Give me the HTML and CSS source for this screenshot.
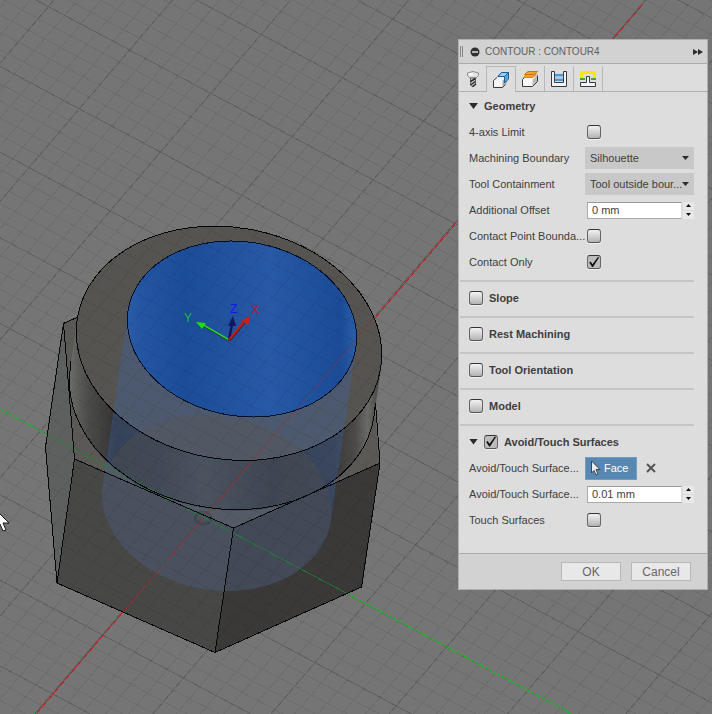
FILE: index.html
```html
<!DOCTYPE html>
<html lang="en">
<head>
<meta charset="utf-8">
<title>Contour</title>
<link rel="stylesheet" href="styles.css">
</head>
<body>
<main class="viewport">
  <svg class="scene" viewBox="0 0 712 714" preserveAspectRatio="xMidYMid slice" role="img" aria-label="Model view">
    <defs>
      <linearGradient id="bore" x1="127" y1="0" x2="357" y2="0" gradientTransform="rotate(-9.870 242 329)" gradientUnits="userSpaceOnUse">
        <stop offset="0" stop-color="#2a5da8"/><stop offset=".06" stop-color="#2355a2"/>
        <stop offset=".25" stop-color="#1b4c98"/><stop offset=".62" stop-color="#2759a6"/>
        <stop offset=".8" stop-color="#1f519d"/><stop offset=".93" stop-color="#1b4b96"/><stop offset="1" stop-color="#2b5faa"/>
      </linearGradient>
      <linearGradient id="collar" x1="69" y1="0" x2="380" y2="0" gradientUnits="userSpaceOnUse">
        <stop offset="0" stop-color="#6c6e6c"/><stop offset=".06" stop-color="#4c4c4a"/>
        <stop offset=".15" stop-color="#353432"/><stop offset=".3" stop-color="#3b3a38"/>
        <stop offset=".43" stop-color="#4a4a48"/><stop offset=".65" stop-color="#343331"/>
        <stop offset=".85" stop-color="#3b3a38"/><stop offset=".92" stop-color="#4c4b49"/><stop offset=".96" stop-color="#6a6a68"/><stop offset="1" stop-color="#444"/>
      </linearGradient>
    </defs>
    <rect width="712" height="714" fill="#757575"/>
    <g id="grid"></g>

    <g>
      <path fill="#5b5955" d="M63 323L84 314 230 300 374 402 380 463 233 528 75 459Z"/>
      <path fill="#5d605f" d="M63 323L45 447 57 583 75 459Z"/>
      <path fill="#474746" d="M75 459L57 583 215 652 233 528Z"/>
      <path fill="#3a3938" d="M233 528L215 652 362 587 380 463Z"/>
      <path fill="url(#collar)" d="M77 320L70 370A153.700 115.900 9.870 0 0 374 417L381 367Z"/>
      <ellipse cx="229" cy="343.300" rx="153.700" ry="115.900" transform="rotate(9.870 229 343.300)" fill="#565450"/>
    </g>
    <path fill="#3868bb" fill-opacity=".3" d="M128 311L102.700 485A115.400 87.050 9.870 0 0 330.800 521L356 347Z"/>
    <ellipse cx="216.700" cy="503" rx="115.400" ry="87.050" transform="rotate(9.870 216.700 503)" fill="#64553c" fill-opacity=".22"/>
    <ellipse cx="242" cy="329" rx="115.400" ry="87.050" transform="rotate(9.870 242 329)" fill="url(#bore)"/>
    <ellipse cx="203" cy="518" rx="8" ry="6" fill="none" stroke="#303640" stroke-width="3" opacity=".35"/>
    <g id="grid-through" opacity=".06"></g>

    <g class="axis" stroke="#b42a2a">
      <path d="M36 714L123 612M375 318L643 4"/>
      <path d="M123 612L250 463.500" opacity=".6"/>
      <path d="M250 463.500L375 318" opacity=".35"/>
    </g>
    <g class="axis" stroke="#1fb32a">
      <path d="M346 593L572 714"/>
      <path d="M0 409L48 435" opacity=".85"/>
      <path d="M48 435L346 593" stroke="#1f8a35" opacity=".65"/>
    </g>

    <g class="edges">
      <ellipse cx="229" cy="343.300" rx="153.700" ry="115.900" transform="rotate(9.870 229 343.300)"/>
      <ellipse cx="242" cy="329" rx="115.400" ry="87.050" transform="rotate(9.870 242 329)" stroke="#04102a"/>
      <path d="M71 361L70 371A153.700 115.900 9.870 0 0 374 416L375.500 403"/>
      <path d="M78 317L63.500 323.500 45.500 447 57 583 215 652.500 361.500 587 380 463 375.500 403M63.500 323.500L74.500 459 57 583M74.500 459L233.500 528 380 463M233.500 528L215 652.500"/>
    </g>

    <g class="triad">
      <path d="M229 340L203 325" stroke="#2fe01f" stroke-width="2"/>
      <path d="M229 341L203 326" stroke="#123a10" stroke-width=".8"/>
      <path d="M196 322L206 323 202 329Z" fill="#1fdc14"/>
      <path d="M229 340L232 324" stroke="#14145e" stroke-width="2.500"/>
      <path d="M233 316L236 326 228 326Z" fill="#151560"/>
      <path d="M229 340L244 322" stroke="#c81b10" stroke-width="2.500"/>
      <path d="M230 341L245 323" stroke="#380808" stroke-width=".8"/>
      <path d="M250 316L248 326 245 322 241 321Z" fill="#d61a0c"/>
      <text x="184" y="322" fill="#18b84a">Y</text>
      <text x="230" y="313" fill="#1414f0">Z</text>
      <text x="251" y="314" fill="#b5182c">X</text>
    </g>
    <path d="M-4 509L-4 528 0 524 3 531 6 530 3 523 9 523-4 510Z" fill="#fff" stroke="#15151c"/>
  </svg>

  <form class="panel">
    <header class="titlebar">
      <span class="grip"></span>
      <button type="button" class="icon-button" aria-label="Collapse">
        <svg width="10" height="10" viewBox="0 0 10 10"><circle cx="5" cy="5" r="4.500" fill="#303030"/><path d="M2 5H8" stroke="#ddd" stroke-width="1.500"/></svg>
      </button>
      <h1>CONTOUR : CONTOUR4</h1>
      <button type="button" class="icon-button" aria-label="Dock">
        <svg width="10" height="8" viewBox="0 0 10 8"><path d="M0 1L5 4 0 7ZM5 1L10 4 5 7Z" fill="#2c2c2c"/></svg>
      </button>
    </header>

    <nav class="tabs">
      <button type="button" class="tab" aria-label="Tool">
        <svg width="14" height="18" viewBox="0 0 14 18">
          <path d="M1.500 3Q7 0 12.500 3V5.500L10 8H4L1.500 5.500Z" fill="#e4e4e4" stroke="#8c8c8c"/>
          <path d="M3 4H7" stroke="#fff" stroke-width="2"/>
          <path d="M4.500 8H9.500V15L7 17 4.500 15Z" fill="#ccc" stroke="#666"/>
          <path d="M4.500 11.500L9.500 8.500M4.500 15L9.500 11.500M6.500 16.500L10 14" stroke="#2c2c2c" stroke-width="1.500"/>
        </svg>
      </button>
      <button type="button" class="tab active" aria-label="Geometry">
        <svg width="18" height="18" viewBox="0 0 18 18">
          <path d="M1.500 9.500L5 6.500H13L14.500 11 11 16.500H1.500Z" fill="#f7f7f7"/>
          <path d="M10.500 9.500L15 5.500V11.500L10.500 16.500Z" fill="#aaa"/>
          <path d="M6 5.500L9.500 1.500H16.500V8L12.500 12V5.500Z" fill="#5ba5da" stroke="#1c5f97"/>
          <path d="M6 5.500L9.500 1.500H16.500L12.500 5.500Z" fill="#9bcdf0" stroke="#1c5f97"/>
          <path d="M5 6.500L1.500 9.500V16.500H10.500L13.500 13.500" fill="none" stroke="#333b48"/>
        </svg>
      </button>
      <button type="button" class="tab" aria-label="Heights">
        <svg width="18" height="18" viewBox="0 0 18 18">
          <path d="M1.500 9.500L4 7H16.500V11.500L11.500 16.500H1.500Z" fill="#fafafa"/>
          <path d="M11.500 9.500L16.500 5V11.500L11.500 16.500Z" fill="#bbb"/>
          <path d="M3 8L1.500 9.500V16.500H11.500L16.500 11.500V5.500" fill="none" stroke="#333b48"/>
          <path d="M2.500 7.500L6 4H15.500L12 7.500Z" fill="#f3a126" stroke="#d98614"/>
          <path d="M3.500 4.500L7 1.500H16.500L13 4.500Z" fill="#f3a126" stroke="#c87810"/>
        </svg>
      </button>
      <button type="button" class="tab" aria-label="Passes">
        <svg width="18" height="18" viewBox="0 0 18 18">
          <path d="M5 5H13M5 10H13" stroke="#4d95d2" stroke-width="2"/><path d="M5 7.500H13" stroke="#a5c8e8" stroke-width="3"/>
          <path d="M1.500 1.500H4.500V12.500H13.500V1.500H16.500V16.500H1.500Z" fill="#f4f4f4" stroke="#333b48"/>
        </svg>
      </button>
      <button type="button" class="tab" aria-label="Linking">
        <svg width="18" height="18" viewBox="0 0 18 18">
          <path d="M2.500 8V2.500H15.500V8" fill="none" stroke="#f6e800" stroke-width="3"/>
          <path d="M1 9H6M12 9H17" stroke="#35aa45" stroke-width="2"/>
          <path d="M1.500 16.500V12.500H7.500V6.500H10.500V12.500H16.500V16.500Z" fill="#f4f4f4" stroke="#333b48"/>
        </svg>
      </button>
    </nav>

    <div class="body">
      <section class="group">
        <h2 class="heading"><span class="twisty"></span>Geometry</h2>
        <div class="row"><label for="axis">4-axis Limit</label><input type="checkbox" id="axis"></div>
        <div class="row"><label for="boundary">Machining Boundary</label><select id="boundary"><option>Silhouette</option></select></div>
        <div class="row"><label for="containment">Tool Containment</label><select id="containment"><option>Tool outside bour...</option></select></div>
        <div class="row"><label for="offset">Additional Offset</label>
          <span class="spin"><input type="text" id="offset" value="0 mm"><span class="steps"><button type="button" class="up" aria-label="Increase offset"></button><button type="button" class="down" aria-label="Decrease offset"></button></span></span></div>
        <div class="row"><label for="contact">Contact Point Bounda...</label><input type="checkbox" id="contact"></div>
        <div class="row"><label for="only">Contact Only</label><input type="checkbox" id="only" checked></div>
      </section>
      <section class="group"><h2 class="heading"><input type="checkbox" id="slope"><label for="slope">Slope</label></h2></section>
      <section class="group"><h2 class="heading"><input type="checkbox" id="rest"><label for="rest">Rest Machining</label></h2></section>
      <section class="group"><h2 class="heading"><input type="checkbox" id="orient"><label for="orient">Tool Orientation</label></h2></section>
      <section class="group"><h2 class="heading"><input type="checkbox" id="model"><label for="model">Model</label></h2></section>
      <section class="group">
        <h2 class="heading"><span class="twisty"></span><input type="checkbox" id="avoid" checked><label for="avoid">Avoid/Touch Surfaces</label></h2>
        <div class="row"><label for="face">Avoid/Touch Surface...</label>
          <button type="button" class="face" id="face"><svg width="11" height="16" viewBox="0 0 11 16"><path d="M1.500 1V13L4 10.500 6 15 8 14 6 9.500H10Z" fill="#e8edf2" stroke="#3c4450"/></svg>Face</button>
          <button type="button" class="icon-button clear" aria-label="Clear selection"><svg width="10" height="10" viewBox="0 0 10 10"><path d="M1 1L9 9M9 1L1 9" stroke="#555" stroke-width="2"/></svg></button></div>
        <div class="row"><label for="clearance">Avoid/Touch Surface...</label>
          <span class="spin"><input type="text" id="clearance" value="0.01 mm"><span class="steps"><button type="button" class="up" aria-label="Increase clearance"></button><button type="button" class="down" aria-label="Decrease clearance"></button></span></span></div>
        <div class="row"><label for="touch">Touch Surfaces</label><input type="checkbox" id="touch"></div>
      </section>
    </div>

    <footer class="actions">
      <button type="button">OK</button>
      <button type="button">Cancel</button>
    </footer>
  </form>
</main>
<script src="grid.js"></script>
</body>
</html>
```
FILE: styles.css
```css
* { box-sizing: border-box; }
body { margin: 0; font: 11px/16px "Liberation Sans", Arial, sans-serif; color: #3e3e3e; background: #757575; }
button, input, select { font: inherit; color: inherit; margin: 0; padding: 0; border: 0; border-radius: 0; }
h1, h2 { margin: 0; font-size: inherit; }
svg { display: block; }

.viewport { position: relative; min-height: 100vh; overflow: hidden; }
.scene { position: absolute; inset: 0; width: 100%; height: 100%; }
.minor, .major, .axis, .edges { fill: none; shape-rendering: crispEdges; }
.minor { stroke: #6c6c6c; }
.major { stroke: #606060; }
.edges { stroke: #050608; stroke-width: 1; }
#grid-through .minor, #grid-through .major { stroke: #000; }
.triad text { font-size: 12px; }

.panel { position: absolute; top: 39px; right: 4px; width: 250px; background: #ddd; border: 1px solid #aeaeae; }
.titlebar { display: flex; align-items: center; height: 24px; padding: 0 4px 0 1px; background: #d2d2d2; border-bottom: 1px solid #aaa; }
.titlebar h1 { flex: 1; font-size: 10px; font-weight: 400; color: #606060; margin-left: 5px; }
.grip { width: 3px; height: 11px; border: solid #888; border-width: 0 1px; margin-right: 7px; }
.icon-button { background: none; }

.tabs { display: flex; height: 28px; padding-top: 2px; border-bottom: 1px solid #b0b0b0; }
.tab { display: flex; align-items: center; justify-content: center; width: 29px; background: none; border-right: 1px solid #b8b8b8; }
.tab:first-child { width: 28px; }
.tab.active { height: 26px; background: #ddd; border-top: 1px solid #b8b8b8; }

.body { padding: 1px 13px 20px 1px; }
.group { padding-left: 9px; border-bottom: 2px solid #c5c5c5; }
.group:last-child { border-bottom: 0; }
.group:first-child { padding-bottom: 5px; }
.heading { display: flex; align-items: center; gap: 6px; height: 34px; padding-bottom: 2px; }
.group:first-child .heading { height: 26px; padding-bottom: 0; }
.group:last-child .heading { height: 29px; padding: 2px 0 0; }
.twisty { width: 9px; height: 6px; background: #2c2c2c; clip-path: polygon(0 0, 100% 0, 50% 100%); }

.row { display: flex; align-items: center; height: 26px; }
.row > label { flex: none; width: 116px; white-space: nowrap; }

input[type="checkbox"] { appearance: none; flex: none; width: 14px; height: 14px; border: 1px solid; border-color: #333 #666 #555; border-radius: 3px; background: linear-gradient(#f2f2f2, #b4b4b4); box-shadow: 0 1px #f0f0f0; }
input[type="checkbox"]:checked { background: #bcbcbc; }
input[type="checkbox"]:checked::after { content: ""; display: block; width: 12px; height: 12px; background: #111; clip-path: polygon(10% 55%, 22% 45%, 38% 68%, 82% 8%, 92% 12%, 42% 92%, 34% 92%); }
.row input[type="checkbox"], .spin { margin-left: 2px; }

select { appearance: none; flex: 1; min-width: 0; height: 22px; padding: 0 2px 0 5px; background: #c8c8c8; }
.row:has(select) { position: relative; }
.row:has(select)::after { content: ""; position: absolute; right: 5px; width: 7px; height: 4px; background: #2c2c2c; clip-path: polygon(0 0, 100% 0, 50% 100%); pointer-events: none; }

.spin { display: flex; flex: 1; min-width: 0; height: 17px; gap: 1px; }
.spin input { flex: 1; min-width: 0; height: 17px; padding: 0 4px; background: #fff; border: 1px solid #aaa; border-right-color: #ddd; border-top-color: #999; }
.steps { display: flex; flex: none; flex-direction: column; justify-content: space-between; width: 11px; }
.steps button { display: flex; align-items: center; justify-content: center; height: 8px; background: #e8e8e8; }
.steps button::after { content: ""; width: 5px; height: 3px; background: #111; clip-path: polygon(0 0, 100% 0, 50% 100%); }
.steps .up::after { clip-path: polygon(50% 0, 100% 100%, 0 100%); }

.face { display: flex; align-items: center; gap: 3px; width: 52px; height: 23px; padding-left: 4px; background: #5887b2; border: 1px solid #6f9bc4; color: #fff; }
.clear { margin-left: 9px; }

.actions { display: flex; justify-content: flex-end; gap: 10px; height: 36px; padding: 8px 16px; background: #d2d2d2; border-top: 1px solid #aaa; }
.actions button { width: 60px; height: 19px; background: #e8e8e8; border: 1px solid #b8b8b8; color: #666; font-size: 12px; }
```
FILE: grid.js
```js
// Ground grid: five minor cells per major cell, in a parallel projection.
const origin = [202.9, 517.2];
const u = [81.2, 43.3];
const v = [-50.3, 58.8];
const at = (m, n) => [origin[0] + m * u[0] + n * v[0], origin[1] + m * u[1] + n * v[1]].map(k => k.toFixed(1)).join(" ");
let minor = "";
let major = "";
for (let i = -60; i <= 60; i++) {
  const k = i / 5;
  const lines = `M${at(k, -12)}L${at(k, 12)}M${at(-12, k)}L${at(12, k)}`;
  if (i % 5) minor += lines; else major += lines;
}
const draw = (id, clip) => {
  document.getElementById(id).innerHTML = `<g${clip}><path class="minor" d="${minor}"/><path class="major" d="${major}"/></g>`;
};
document.getElementById("grid").insertAdjacentHTML("beforebegin",
  `<clipPath id="solid"><path d="M63 323L78 317Q90 235 217 226Q380 240 381 355L375 403 380 463 362 587 215 652 57 583 45 447Z"/></clipPath>`);
draw("grid", "");
draw("grid-through", ' clip-path="url(#solid)"');
```
